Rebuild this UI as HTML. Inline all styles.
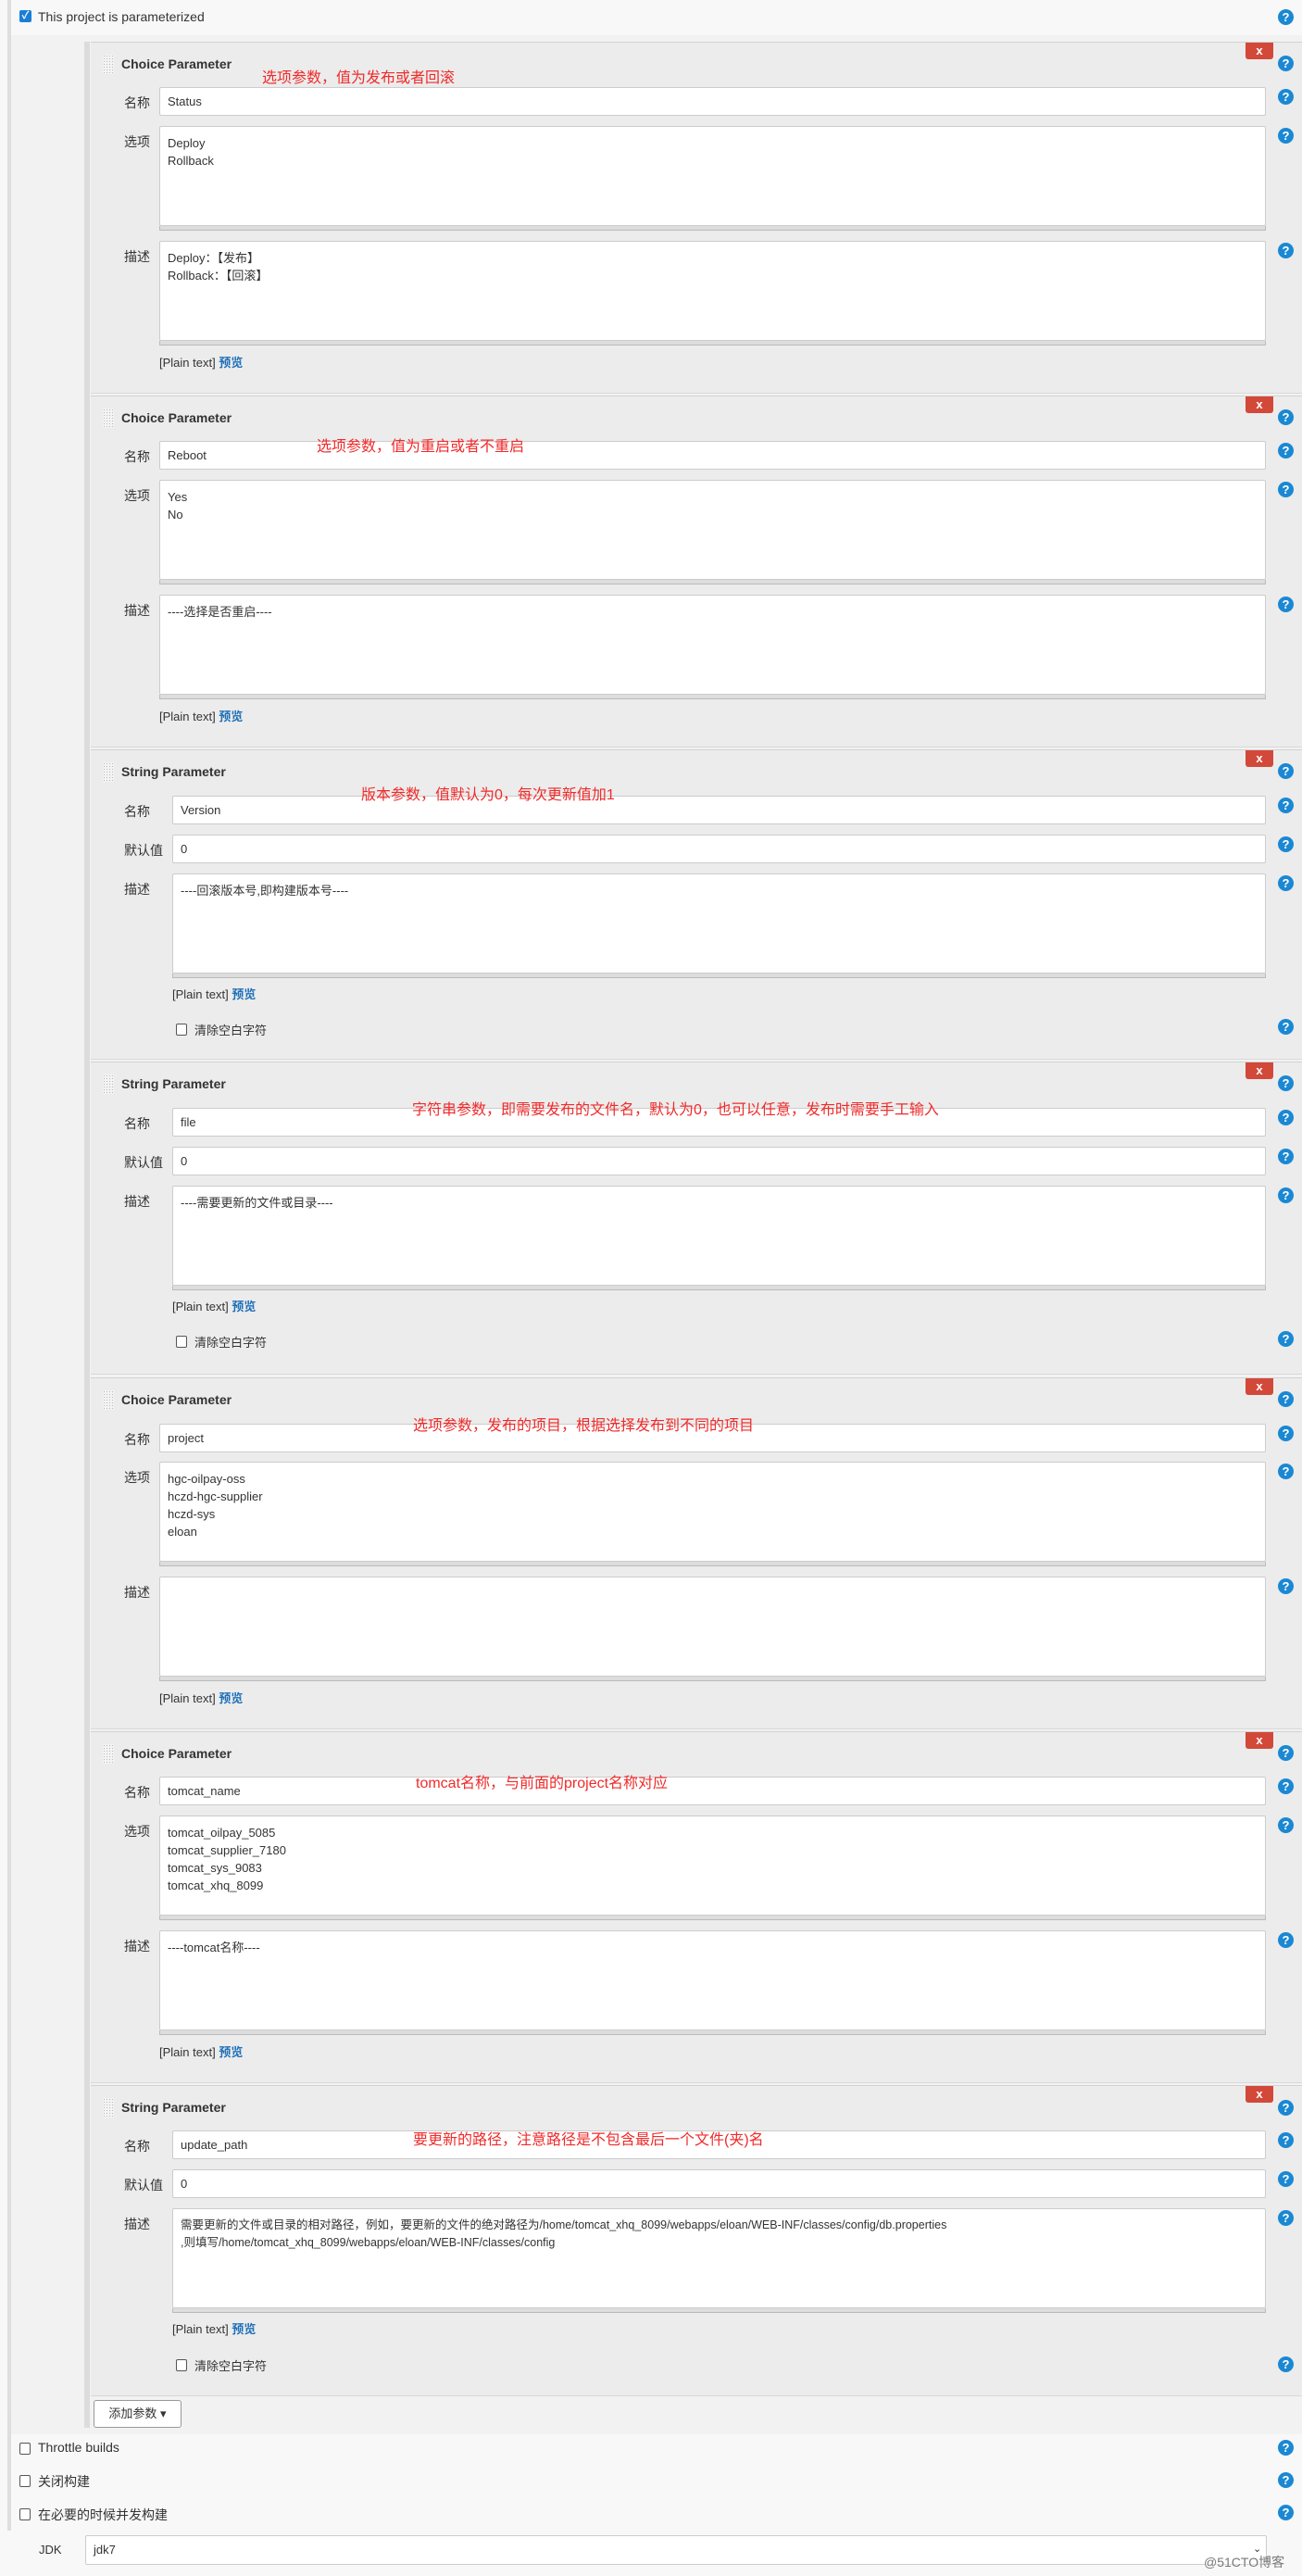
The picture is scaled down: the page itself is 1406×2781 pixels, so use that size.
<!DOCTYPE html>
<html><head><meta charset="utf-8"><style>
*{box-sizing:border-box;margin:0;padding:0}
body{width:1406px;height:2781px;position:relative;background:#f8f8f8;font-family:"Liberation Sans","Noto Sans CJK SC",sans-serif;font-size:13px;color:#333;overflow:hidden}
.a{position:absolute}
.stripe{left:8px;top:0;width:4px;height:2732px;background:#dedede}
.cont{left:12px;top:38px;width:1394px;height:2590px;background:#f2f2f2}
.bar{left:91px;top:45px;width:6px;height:2576px;background:#dcdcdc}
.blk{position:absolute;left:98px;width:1308px;background:#ececec;border-top:1px solid #d2d2d2;border-bottom:1px solid #d8d8d8}
.h{position:absolute;left:13px;top:13px;width:12px;height:21px;background-image:radial-gradient(#bbb 0.7px,transparent 0.8px);background-size:3px 3px;background-color:#f4f4f4}
.t{position:absolute;left:33px;top:15px;font-weight:bold;font-size:14px;color:#333}
.x{position:absolute;left:1247px;top:0;width:30px;height:18px;background:#d24939;color:#fff;font-weight:bold;font-size:13px;text-align:center;line-height:17px;border-radius:0 0 3px 3px}
.q{position:absolute;width:17px;height:17px;border-radius:50%;background:#1b88d3;color:#fff;font-weight:bold;font-size:13px;text-align:center;line-height:17px}
.lb{position:absolute;left:36px;font-size:14px;color:#333}
.in{position:absolute;height:31px;background:#fff;border:1px solid #ccc;border-radius:2px;padding:7px 8px;font-size:13px;white-space:nowrap}
.ta{position:absolute;height:108px;background:#fff;border:1px solid #ccc;border-radius:2px;padding:8px 8px;font-size:13px;line-height:19px;white-space:pre}
.gr{position:absolute;height:5px;background:#ddd;border:1px solid #bbb;border-top:none}
.pt{position:absolute;font-size:13px;color:#333}
.pt b{color:#1e6fb8;font-weight:bold}
.note{position:absolute;color:#f02a2a;font-size:16px;white-space:nowrap}
.cb{position:absolute;width:12px;height:13px;border:1px solid #555;border-radius:2px;background:#fff}
</style></head><body>
<div class="a stripe"></div>
<div class="a cont"></div>
<div class="a" style="left:21px;top:11px;width:13px;height:13px;background:#1a7fd4;border-radius:2px;color:#fff;font-size:11px;line-height:13px;text-align:center;font-weight:bold">✓</div>
<div class="a" style="left:41px;top:10px;font-size:14px">This project is parameterized</div>
<div class="q" style="left:1380px;top:10px">?</div>
<div class="a bar"></div>

<!-- Block 1 -->
<div class="blk" style="top:45px;height:380px">
<div class="h"></div><div class="t">Choice Parameter</div><div class="x">x</div>
<div class="q" style="left:1282px;top:14px">?</div>
<div class="note" style="left:185px;top:24px">选项参数，值为发布或者回滚</div>
<div class="lb" style="top:55px">名称</div><div class="in" style="left:74px;top:48px;width:1195px">Status</div><div class="q" style="left:1282px;top:50px">?</div>
<div class="lb" style="top:97px">选项</div><div class="ta" style="left:74px;top:90px;width:1195px">Deploy
Rollback</div><div class="gr" style="left:74px;top:198px;width:1195px"></div><div class="q" style="left:1282px;top:92px">?</div>
<div class="lb" style="top:221px">描述</div><div class="ta" style="left:74px;top:214px;width:1195px">Deploy：【发布】
Rollback：【回滚】</div><div class="gr" style="left:74px;top:322px;width:1195px"></div><div class="q" style="left:1282px;top:216px">?</div>
<div class="pt" style="left:74px;top:335px">[Plain text] <b>预览</b></div>
</div>

<!-- Block 2 -->
<div class="blk" style="top:427px;height:380px">
<div class="h"></div><div class="t">Choice Parameter</div><div class="x">x</div>
<div class="q" style="left:1282px;top:14px">?</div>
<div class="lb" style="top:55px">名称</div><div class="in" style="left:74px;top:48px;width:1195px">Reboot</div><div class="q" style="left:1282px;top:50px">?</div>
<div class="note" style="left:244px;top:40px">选项参数，值为重启或者不重启</div>
<div class="lb" style="top:97px">选项</div><div class="ta" style="left:74px;top:90px;width:1195px">Yes
No</div><div class="gr" style="left:74px;top:198px;width:1195px"></div><div class="q" style="left:1282px;top:92px">?</div>
<div class="lb" style="top:221px">描述</div><div class="ta" style="left:74px;top:214px;width:1195px">----选择是否重启----</div><div class="gr" style="left:74px;top:322px;width:1195px"></div><div class="q" style="left:1282px;top:216px">?</div>
<div class="pt" style="left:74px;top:335px">[Plain text] <b>预览</b></div>
</div>

<!-- Block 3 -->
<div class="blk" style="top:809px;height:335px">
<div class="h"></div><div class="t">String Parameter</div><div class="x">x</div>
<div class="q" style="left:1282px;top:14px">?</div>
<div class="lb" style="top:56px">名称</div><div class="in" style="left:88px;top:49px;width:1181px">Version</div><div class="q" style="left:1282px;top:51px">?</div>
<div class="note" style="left:292px;top:34px">版本参数，值默认为0，每次更新值加1</div>
<div class="lb" style="top:98px">默认值</div><div class="in" style="left:88px;top:91px;width:1181px">0</div><div class="q" style="left:1282px;top:93px">?</div>
<div class="lb" style="top:140px">描述</div><div class="ta" style="left:88px;top:133px;width:1181px">----回滚版本号,即构建版本号----</div><div class="gr" style="left:88px;top:241px;width:1181px"></div><div class="q" style="left:1282px;top:135px">?</div>
<div class="pt" style="left:88px;top:253px">[Plain text] <b>预览</b></div>
<div class="cb" style="left:92px;top:295px"></div><div class="pt" style="left:112px;top:292px">清除空白字符</div>
<div class="q" style="left:1282px;top:290px">?</div>
</div>

<!-- Block 4 -->
<div class="blk" style="top:1146px;height:338px">
<div class="h"></div><div class="t">String Parameter</div><div class="x">x</div>
<div class="q" style="left:1282px;top:14px">?</div>
<div class="lb" style="top:56px">名称</div><div class="in" style="left:88px;top:49px;width:1181px">file</div><div class="q" style="left:1282px;top:51px">?</div>
<div class="note" style="left:347px;top:37px">字符串参数，即需要发布的文件名，默认为0，也可以任意，发布时需要手工输入</div>
<div class="lb" style="top:98px">默认值</div><div class="in" style="left:88px;top:91px;width:1181px">0</div><div class="q" style="left:1282px;top:93px">?</div>
<div class="lb" style="top:140px">描述</div><div class="ta" style="left:88px;top:133px;width:1181px">----需要更新的文件或目录----</div><div class="gr" style="left:88px;top:241px;width:1181px"></div><div class="q" style="left:1282px;top:135px">?</div>
<div class="pt" style="left:88px;top:253px">[Plain text] <b>预览</b></div>
<div class="cb" style="left:92px;top:295px"></div><div class="pt" style="left:112px;top:292px">清除空白字符</div>
<div class="q" style="left:1282px;top:290px">?</div>
</div>

<!-- Block 5 -->
<div class="blk" style="top:1487px;height:380px">
<div class="h"></div><div class="t">Choice Parameter</div><div class="x">x</div>
<div class="q" style="left:1282px;top:14px">?</div>
<div class="lb" style="top:56px">名称</div><div class="in" style="left:74px;top:49px;width:1195px">project</div><div class="q" style="left:1282px;top:51px">?</div>
<div class="note" style="left:348px;top:37px">选项参数，发布的项目，根据选择发布到不同的项目</div>
<div class="lb" style="top:97px">选项</div><div class="ta" style="left:74px;top:90px;width:1195px">hgc-oilpay-oss
hczd-hgc-supplier
hczd-sys
eloan</div><div class="gr" style="left:74px;top:198px;width:1195px"></div><div class="q" style="left:1282px;top:92px">?</div>
<div class="lb" style="top:221px">描述</div><div class="ta" style="left:74px;top:214px;width:1195px"></div><div class="gr" style="left:74px;top:322px;width:1195px"></div><div class="q" style="left:1282px;top:216px">?</div>
<div class="pt" style="left:74px;top:335px">[Plain text] <b>预览</b></div>
</div>

<!-- Block 6 -->
<div class="blk" style="top:1869px;height:380px">
<div class="h"></div><div class="t">Choice Parameter</div><div class="x">x</div>
<div class="q" style="left:1282px;top:14px">?</div>
<div class="lb" style="top:55px">名称</div><div class="in" style="left:74px;top:48px;width:1195px">tomcat_name</div><div class="q" style="left:1282px;top:50px">?</div>
<div class="note" style="left:351px;top:41px">tomcat名称，与前面的project名称对应</div>
<div class="lb" style="top:97px">选项</div><div class="ta" style="left:74px;top:90px;width:1195px">tomcat_oilpay_5085
tomcat_supplier_7180
tomcat_sys_9083
tomcat_xhq_8099</div><div class="gr" style="left:74px;top:198px;width:1195px"></div><div class="q" style="left:1282px;top:92px">?</div>
<div class="lb" style="top:221px">描述</div><div class="ta" style="left:74px;top:214px;width:1195px">----tomcat名称----</div><div class="gr" style="left:74px;top:322px;width:1195px"></div><div class="q" style="left:1282px;top:216px">?</div>
<div class="pt" style="left:74px;top:335px">[Plain text] <b>预览</b></div>
</div>

<!-- Block 7 -->
<div class="blk" style="top:2251px;height:336px">
<div class="h"></div><div class="t">String Parameter</div><div class="x">x</div>
<div class="q" style="left:1282px;top:15px">?</div>
<div class="lb" style="top:55px">名称</div><div class="in" style="left:88px;top:48px;width:1181px">update_path</div><div class="q" style="left:1282px;top:50px">?</div>
<div class="note" style="left:348px;top:44px">要更新的路径，注意路径是不包含最后一个文件(夹)名</div>
<div class="lb" style="top:97px">默认值</div><div class="in" style="left:88px;top:90px;width:1181px">0</div><div class="q" style="left:1282px;top:92px">?</div>
<div class="lb" style="top:139px">描述</div><div class="ta" style="left:88px;top:132px;width:1181px;font-size:12.5px">需要更新的文件或目录的相对路径，例如，要更新的文件的绝对路径为/home/tomcat_xhq_8099/webapps/eloan/WEB-INF/classes/config/db.properties
,则填写/home/tomcat_xhq_8099/webapps/eloan/WEB-INF/classes/config</div><div class="gr" style="left:88px;top:240px;width:1181px"></div><div class="q" style="left:1282px;top:134px">?</div>
<div class="pt" style="left:88px;top:252px">[Plain text] <b>预览</b></div>
<div class="cb" style="left:92px;top:295px"></div><div class="pt" style="left:112px;top:292px">清除空白字符</div>
<div class="q" style="left:1282px;top:292px">?</div>
</div>

<div class="a" style="left:101px;top:2591px;width:95px;height:30px;background:#fff;border:1px solid #999;border-radius:3px;font-size:13px;text-align:center;line-height:28px">添加参数 ▾</div>

<div class="cb" style="left:21px;top:2637px"></div><div class="a" style="left:41px;top:2634px;font-size:14px">Throttle builds</div>
<div class="q" style="left:1380px;top:2634px">?</div>
<div class="cb" style="left:21px;top:2672px"></div><div class="a" style="left:41px;top:2669px;font-size:14px">关闭构建</div>
<div class="q" style="left:1380px;top:2669px">?</div>
<div class="cb" style="left:21px;top:2708px"></div><div class="a" style="left:41px;top:2705px;font-size:14px">在必要的时候并发构建</div>
<div class="q" style="left:1380px;top:2704px">?</div>

<div class="a" style="left:42px;top:2745px;font-size:13px">JDK</div>
<div class="in" style="left:92px;top:2737px;width:1276px;height:32px">jdk7</div>
<div class="a" style="left:1353px;top:2745px;font-size:11px;color:#333">⌄</div>
<div class="a" style="left:1300px;top:2756px;font-size:14px;color:#777;text-shadow:0 0 2px #fff,0 0 2px #fff">@51CTO博客</div>
</body></html>
